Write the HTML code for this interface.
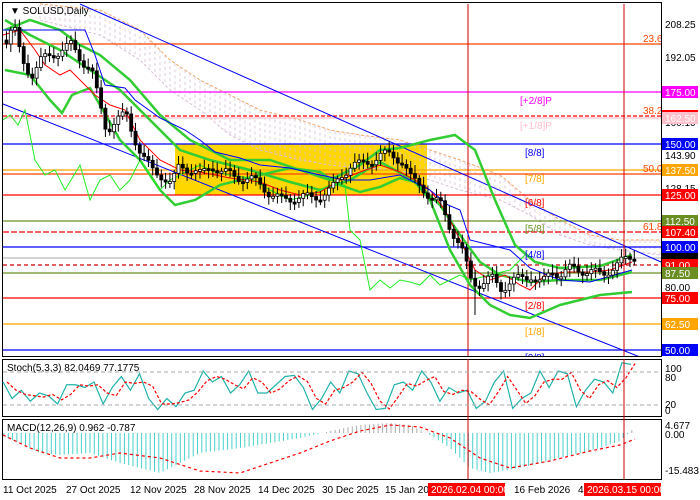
<!DOCTYPE html>
<html><head><meta charset="utf-8"><style>
html,body{margin:0;padding:0;background:#fff;width:700px;height:500px;overflow:hidden}
svg{display:block;font-family:"Liberation Sans",sans-serif}
</style></head><body>
<svg id="s" width="700" height="500" xmlns="http://www.w3.org/2000/svg">
<rect x="0" y="0" width="700" height="500" fill="#fff"/>
<rect x="175" y="144" width="252" height="51" fill="#ffd700"/>
<g id="cloud"></g>
<g stroke-width="1.2">
<line x1="3" x2="661" y1="44" y2="44" stroke="#ff4500"/>
<line x1="3" x2="661" y1="92" y2="92" stroke="#ff00ff"/>
<line x1="3" x2="661" y1="116" y2="116" stroke="#ff0000" stroke-dasharray="4,2"/>
<line x1="3" x2="661" y1="118" y2="118" stroke="#ffc0cb"/>
<line x1="3" x2="661" y1="144" y2="144" stroke="#0000ff"/>
<line x1="3" x2="661" y1="170" y2="170" stroke="#ffa500"/>
<line x1="3" x2="661" y1="174" y2="174" stroke="#ff4500"/>
<line x1="3" x2="661" y1="195" y2="195" stroke="#ff0000"/>
<line x1="3" x2="661" y1="221" y2="221" stroke="#6b8e23"/>
<line x1="3" x2="661" y1="232" y2="232" stroke="#ff0000" stroke-dasharray="6,2"/>
<line x1="3" x2="661" y1="247" y2="247" stroke="#0000ff"/>
<line x1="3" x2="661" y1="258" y2="258" stroke="#bbb"/>
<line x1="3" x2="661" y1="265" y2="265" stroke="#cc0000" stroke-dasharray="4,3"/>
<line x1="3" x2="661" y1="273" y2="273" stroke="#6b8e23"/>
<line x1="3" x2="661" y1="298" y2="298" stroke="#ff0000"/>
<line x1="3" x2="661" y1="324" y2="324" stroke="#ffa500"/>
<line x1="3" x2="661" y1="350" y2="350" stroke="#0000ff"/>
</g>
<line x1="80" y1="4" x2="661" y2="262" stroke="#0000ff" stroke-width="1"/>
<line x1="3" y1="104" x2="640" y2="357" stroke="#0000ff" stroke-width="1"/>
<line x1="468" y1="4" x2="468" y2="479" stroke="#cc0000"/>
<line x1="624" y1="4" x2="624" y2="479" stroke="#cc0000"/>
<g id="ind"></g>
<g id="cand"></g>
<g font-size="10">
<text x="643" y="42" fill="#ff4500">23.6</text>
<text x="643" y="114" fill="#ff4500">38.2</text>
<text x="643" y="172" fill="#ff4500">50.0</text>
<text x="643" y="230" fill="#ff4500">61.8</text>
<text x="520" y="104" fill="#ff00ff">[+2/8]P</text>
<text x="520" y="129" fill="#ffc0cb">[+1/8]P</text>
<text x="525" y="156" fill="#0000ff">[8/8]</text>
<text x="525" y="182" fill="#ffa500">[7/8]</text>
<text x="525" y="206" fill="#ff0000">[6/8]</text>
<text x="525" y="232" fill="#6b8e23">[5/8]</text>
<text x="525" y="258" fill="#0000ff">[4/8]</text>
<text x="525" y="309" fill="#ff0000">[2/8]</text>
<text x="525" y="335" fill="#ffa500">[1/8]</text>
<text x="525" y="361" fill="#0000ff">[0/8]</text>
</g>
<text x="10" y="14" font-size="10" fill="#000">▼ SOLUSD,Daily</text>
<rect x="2.5" y="2.5" width="659" height="354" fill="none" stroke="#000"/>
<rect x="0" y="357" width="662" height="2" fill="#fff"/>
<rect x="2.5" y="359.5" width="659" height="57" fill="#fff" stroke="#000"/>
<rect x="2.5" y="419.5" width="659" height="60" fill="#fff" stroke="#000"/>
<g id="osc"></g>
<line x1="3" x2="661" y1="372" y2="372" stroke="#aaa" stroke-dasharray="4,3"/>
<line x1="3" x2="661" y1="405" y2="405" stroke="#aaa" stroke-dasharray="4,3"/>
<text x="7" y="371" font-size="10">Stoch(5,3,3) 82.0469 77.1775</text>
<text x="7" y="431" font-size="10">MACD(12,26,9) 0.962 -0.787</text>
<g font-size="10" fill="#000">
<text x="665" y="28">208.25</text>
<text x="665" y="61">192.05</text>
<text x="665" y="126">160.10</text>
<text x="665" y="159">143.90</text>
<text x="665" y="192">128.15</text>
<text x="665" y="291">80.00</text>
<text x="665" y="372">100</text><text x="665" y="381">80</text>
<text x="665" y="408">20</text><text x="665" y="414">0</text>
<text x="665" y="429">4.677</text><text x="665" y="438">0.00</text>
<text x="665" y="474">-15.483</text>
</g>
<g font-size="10" fill="#fff">
<rect x="662" y="86" width="36" height="12" fill="#ff00ff"/><text x="665" y="96">175.00</text>
<rect x="662" y="110" width="36" height="2" fill="#ff0000"/>
<rect x="662" y="112" width="36" height="12" fill="#ffc0cb"/><text x="665" y="122">162.50</text>
<rect x="662" y="138" width="36" height="12" fill="#0000ff"/><text x="665" y="148">150.00</text>
<rect x="662" y="164" width="36" height="12" fill="#ffa500"/><text x="665" y="174">137.50</text>
<rect x="662" y="189" width="36" height="12" fill="#ff0000"/><text x="665" y="199">125.00</text>
<rect x="662" y="215" width="36" height="12" fill="#6b8e23"/><text x="665" y="225">112.50</text>
<rect x="662" y="226" width="36" height="12" fill="#ff0000"/><text x="665" y="236">107.40</text>
<rect x="662" y="241" width="36" height="12" fill="#0000ff"/><text x="665" y="251">100.00</text>
<rect x="662" y="253" width="36" height="8" fill="#000"/>
<rect x="662" y="259" width="36" height="12" fill="#ff0000"/><text x="665" y="269">91.00</text>
<rect x="662" y="267" width="36" height="12" fill="#6b8e23"/><text x="665" y="277">87.50</text>
<rect x="662" y="292" width="36" height="12" fill="#ff0000"/><text x="665" y="302">75.00</text>
<rect x="662" y="318" width="36" height="12" fill="#ffa500"/><text x="665" y="328">62.50</text>
<rect x="662" y="344" width="36" height="12" fill="#0000ff"/><text x="665" y="354">50.00</text>
</g>
<g font-size="10" fill="#000">
<text x="3" y="493">11 Oct 2025</text>
<text x="66" y="493">27 Oct 2025</text>
<text x="130" y="493">12 Nov 2025</text>
<text x="194" y="493">28 Nov 2025</text>
<text x="258" y="493">14 Dec 2025</text>
<text x="322" y="493">30 Dec 2025</text>
<text x="385" y="493">15 Jan 20</text>
<text x="514" y="493">16 Feb 2026</text>
<text x="578" y="493">4</text>
</g>
<rect x="428" y="483" width="77" height="13" fill="#ff0000"/>
<text x="431" y="493" font-size="10" fill="#fff">2026.02.04 00:00</text>
<rect x="584" y="483" width="77" height="13" fill="#ff0000"/>
<text x="587" y="493" font-size="10" fill="#fff">2026.03.15 00:00</text>
</svg>
<script>
(function(){
var NS="http://www.w3.org/2000/svg";
function el(p,t,a){var e=document.createElementNS(NS,t);for(var k in a)e.setAttribute(k,a[k]);document.getElementById(p).appendChild(e);return e;}
function interp(pts,x){for(var i=0;i<pts.length-1;i++){if(x>=pts[i][0]&&x<=pts[i+1][0]){var t=(x-pts[i][0])/(pts[i+1][0]-pts[i][0]);return pts[i][1]+t*(pts[i+1][1]-pts[i][1]);}}return pts[pts.length-1][1];}
function pl(p,pts,c,w,d){var s=pts.map(function(q){return q[0]+","+q[1]}).join(" ");var a={points:s,fill:"none",stroke:c,"stroke-width":w};if(d)a["stroke-dasharray"]=d;el(p,"polyline",a);}
var cu=[[40,4],[100,10],[140,30],[170,60],[200,80],[230,95],[260,110],[300,120],[330,130],[360,135],[400,140],[430,150],[460,160],[500,175],[530,200],[560,220],[590,235],[620,240],[661,240]];
var cl=[[40,20],[100,35],[140,60],[170,90],[200,110],[230,135],[260,150],[300,160],[330,165],[360,168],[400,170],[430,180],[460,190],[500,200],[530,215],[560,235],[590,245],[620,250],[661,255]];
pl("cloud",cu,"#f4a460",1,"3,2");pl("cloud",cl,"#d8bfd8",1,"3,2");
for(var x=40;x<661;x+=5){el("cloud","line",{x1:x,x2:x,y1:interp(cu,x),y2:interp(cl,x),stroke:"#d8bfd8","stroke-width":0.8,"stroke-dasharray":"3,3"});}
var P=[[5,40],[12,25],[20,60],[30,75],[40,60],[50,55],[60,50],[70,45],[80,60],[90,70],[97,100],[105,130],[115,120],[125,115],[132,135],[140,155],[150,170],[160,175],[170,185],[178,165],[190,170],[200,175],[210,165],[220,172],[230,175],[240,178],[250,180],[260,185],[270,195],[280,200],[290,198],[300,197],[310,198],[320,195],[330,190],[340,175],[350,165],[360,165],[370,160],[380,155],[390,155],[400,160],[410,180],[420,185],[430,200],[440,205],[450,230],[460,250],[470,280],[480,285],[490,278],[500,288],[510,282],[520,278],[530,275],[540,285],[550,270],[560,275],[570,268],[580,270],[590,272],[600,275],[610,268],[620,262],[632,256]];
var prev=interp(P,5);
for(var x=5;x<634;x+=4.3){var c=interp(P,x)+Math.sin(x*1.7)*5;var tp=Math.min(prev,c),h=Math.max(2,Math.abs(prev-c));var up=c<prev;
el("cand","line",{x1:x+1.5,x2:x+1.5,y1:tp-3-Math.abs(Math.sin(x))*6,y2:tp+h+3+Math.abs(Math.cos(x))*5,stroke:"#000","stroke-width":1});
el("cand","rect",{x:x,y:tp,width:3,height:h,fill:up?"#fff":"#000",stroke:"#000","stroke-width":0.8});prev=c;}
el("cand","line",{x1:475,x2:475,y1:270,y2:315,stroke:"#000","stroke-width":1});
var U=[[5,30],[30,20],[60,30],[80,45],[100,55],[130,80],[160,115],[190,140],[230,160],[270,160],[300,170],[330,180],[360,165],[380,150],[400,148],[430,140],[455,135],[475,150],[495,200],[515,245],[535,262],[560,268],[600,266],[632,255]];
var M=[[5,20],[30,35],[60,50],[90,70],[120,90],[150,120],[180,150],[210,160],[250,170],[290,182],[320,190],[350,180],[380,162],[410,178],[440,205],[460,235],[480,262],[500,275],[530,282],[560,280],[600,280],[632,272]];
var L=[[5,70],[30,75],[50,100],[62,113],[72,95],[90,88],[100,105],[120,140],[140,160],[160,190],[175,205],[195,200],[220,185],[260,175],[290,168],[320,172],[340,185],[360,192],[380,187],[400,178],[415,182],[430,200],[450,250],[470,285],[490,305],[510,315],[530,318],[560,305],[600,295],[632,292]];
pl("ind",U,"#32cd32",2.5);pl("ind",M,"#32cd32",2.5);pl("ind",L,"#32cd32",2.5);
var C=[[3,120],[10,115],[18,125],[25,110],[35,160],[45,175],[55,170],[65,190],[80,165],[90,200],[100,180],[110,175],[120,190],[130,180],[140,160],[150,175],[160,190],[170,180],[180,175],[190,170],[200,165],[215,172],[230,175],[250,178],[270,190],[290,200],[310,195],[330,185],[345,185],[350,230],[360,240],[370,290],[380,280],[390,288],[400,280],[410,282],[420,285],[430,275],[440,285],[450,280],[460,275],[470,280],[490,275],[510,270],[525,255]];
pl("ind",C,"#22ee22",1);
var R=[[3,35],[20,30],[35,50],[45,65],[60,75],[70,70],[80,80],[95,95],[110,105],[125,110],[140,140],[160,160],[180,170],[200,172],[230,178],[260,182],[280,190],[300,195],[320,192],[340,180],[360,172],[380,165],[400,172],[415,180],[430,190],[445,210],[460,240],[475,270],[490,280],[505,275],[520,285],[530,290],[545,275],[565,272],[590,272],[610,270],[632,262]];
var B=[[3,30],[85,30],[95,55],[105,85],[125,88],[135,100],[160,118],[185,130],[200,140],[215,152],[240,158],[260,165],[290,168],[320,175],[345,180],[370,180],[400,175],[430,190],[448,205],[460,210],[470,240],[490,245],[510,250],[530,268],[560,280],[590,282],[632,270]];
pl("ind",R,"#ff0000",1);pl("ind",B,"#0000ff",1);
var S=[],Sd=[];
var sv=[60,30,45,25,40,35,20,55,55,50,60,20,50,70,45,75,30,10,30,15,40,45,80,60,70,40,55,80,40,40,55,70,72,50,10,30,60,40,80,75,40,10,12,55,60,45,80,60,25,50,40,45,12,25,60,80,12,30,40,80,50,80,75,15,45,65,60,40,95,92];
for(var i=0;i<sv.length;i++){var x=3+i*(628/(sv.length-1));var y=415-sv[i]*0.55;S.push([x,y]);}
for(var i=0;i<S.length;i++){Sd.push([S[i][0]+4,S[Math.max(0,i-1)][1]*0.5+S[i][1]*0.5]);}
pl("osc",S,"#20b2aa",1.2);pl("osc",Sd,"#ff0000",1.2,"3,2");
var Mh=[[3,-3],[20,-10],[40,-20],[60,-22],[90,-20],[120,-30],[160,-40],[180,-30],[200,-20],[240,-15],[270,-10],[300,-5],[330,2],[360,8],[390,10],[410,8],[430,-2],[450,-15],[470,-35],[490,-40],[520,-35],[560,-25],[600,-15],[620,-8],[632,3]];
for(var x=4;x<634;x+=4.3){var v=interp(Mh,x);el("osc","line",{x1:x,x2:x,y1:433,y2:433-v,stroke:v>0?"#aaa":"#48d1cc","stroke-width":1});}
var Ms=[[3,-2],[30,-15],[60,-25],[90,-25],[120,-20],[160,-25],[200,-38],[240,-40],[270,-30],[300,-20],[330,-8],[360,2],[390,8],[420,6],[450,-5],[480,-25],[510,-35],[550,-28],[590,-18],[620,-12],[635,-6]];
pl("osc",Ms.map(function(q){return [q[0],433-q[1]]}),"#ff0000",1.2,"3,3");
el("osc","line",{x1:468,x2:468,y1:359,y2:479,stroke:"#cc0000"});
el("osc","line",{x1:624,x2:624,y1:359,y2:479,stroke:"#cc0000"});
})();
</script>
</body></html>
